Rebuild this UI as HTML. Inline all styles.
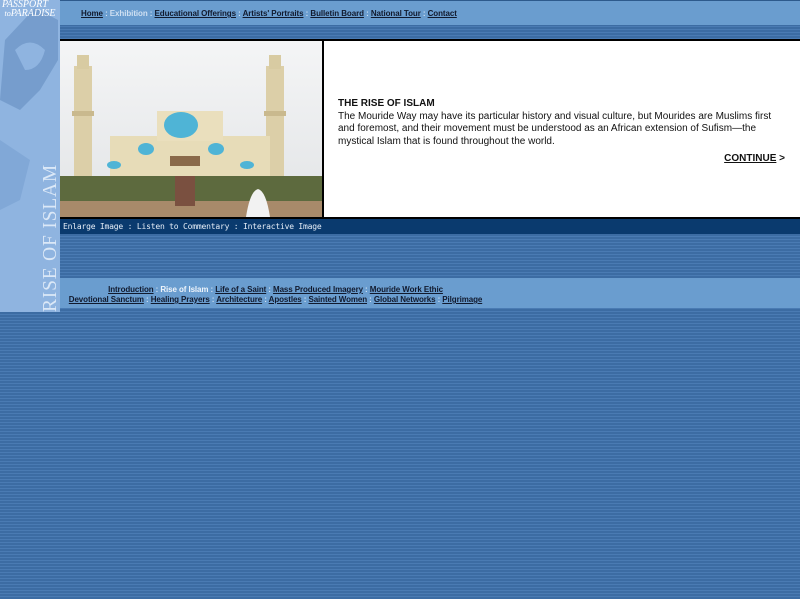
<!DOCTYPE html>
<html><head><meta charset="utf-8"><style>
*{margin:0;padding:0}
body{width:800px;height:599px;overflow:hidden;position:relative;font-family:"Liberation Sans",Arial,sans-serif;
background:repeating-linear-gradient(to bottom,#3c6ca3 0,#3c6ca3 2px,#4a7bb3 2px,#4a7bb3 3px);}
.abs{position:absolute}
a{color:#0d1a33;text-decoration:underline;font-weight:bold}
.nav{font-size:8px;font-weight:bold;color:#cfe0f2;white-space:nowrap}
.nav a{color:#111a2e}
</style></head><body>
<div class="abs" style="left:0;top:0;width:60px;height:312px;background:#8fb4e0;overflow:hidden">
<svg width="60" height="312" style="position:absolute;left:0;top:0">
<path d="M5 40 L35 8 L58 20 L58 60 L40 90 L20 110 L0 100 Z" fill="#6f97c8" opacity=".8"/>
<path d="M15 50 Q30 35 45 50 Q40 70 25 70 Z" fill="#8fb4e0"/>
<path d="M0 140 L30 160 L20 200 L0 210 Z" fill="#7aa2d3" opacity=".7"/>
</svg>
<div class="abs" style="left:2px;top:0;color:#fff;font-family:'Liberation Serif',serif;font-style:italic;font-size:10px;line-height:9px">PASSPORT<br>&nbsp;<span style="font-size:8px">to</span>PARADISE</div>
<div class="abs" style="left:42px;top:312px;transform-origin:0 0;transform:rotate(-90deg);color:#dbe8f7;font-family:'Liberation Serif',serif;font-size:19.5px;letter-spacing:0.8px;white-space:nowrap;line-height:18px">RISE OF ISLAM</div>
</div>
<div class="abs" style="left:60px;top:0;width:740px;height:25px;background:#6a9dcf;border-top:1px solid #2d5a8c;box-sizing:border-box"></div>
<div class="abs nav" style="left:81px;top:9px;letter-spacing:-0.08px">
<a>Home</a> : Exhibition : <a>Educational Offerings</a> : <a>Artists' Portraits</a> : <a>Bulletin Board</a> : <a>National Tour</a> : <a>Contact</a></div>
<div class="abs" style="left:60px;top:39px;width:740px;height:2px;background:#000"></div>
<div class="abs" style="left:60px;top:41px;width:262px;height:176px;overflow:hidden;background:#eceef0">
<svg width="262" height="176">
<defs><linearGradient id="s" x1="0" y1="0" x2="0" y2="1"><stop offset="0" stop-color="#f4f5f6"/><stop offset="1" stop-color="#e2e4e6"/></linearGradient></defs>
<rect width="262" height="176" fill="url(#s)"/>
<rect x="14" y="25" width="18" height="110" fill="#dccfa8"/><rect x="17" y="14" width="12" height="14" fill="#d8cba2"/>
<rect x="206" y="25" width="18" height="110" fill="#dccfa8"/><rect x="209" y="14" width="12" height="14" fill="#d8cba2"/>
<rect x="12" y="70" width="22" height="5" fill="#c9b98e"/><rect x="204" y="70" width="22" height="5" fill="#c9b98e"/>
<rect x="50" y="95" width="160" height="45" fill="#e7dcb8"/>
<rect x="97" y="70" width="66" height="30" fill="#eadfbd"/>
<ellipse cx="121" cy="84" rx="17" ry="13" fill="#4fb4d6"/>
<ellipse cx="86" cy="108" rx="8" ry="6" fill="#4fb4d6"/><ellipse cx="156" cy="108" rx="8" ry="6" fill="#4fb4d6"/>
<ellipse cx="54" cy="124" rx="7" ry="4" fill="#4fb4d6"/><ellipse cx="187" cy="124" rx="7" ry="4" fill="#4fb4d6"/>
<rect x="110" y="115" width="30" height="10" fill="#8a6a4a"/>
<rect x="0" y="135" width="262" height="30" fill="#5d6a3e"/>
<rect x="0" y="160" width="262" height="16" fill="#a88a6a"/>
<rect x="115" y="135" width="20" height="30" fill="#7a5040"/>
<path d="M186 176 Q190 150 198 148 Q206 150 210 176 Z" fill="#f2f2f2"/>
</svg></div>
<div class="abs" style="left:322px;top:41px;width:2px;height:176px;background:#000"></div>
<div class="abs" style="left:324px;top:41px;width:476px;height:176px;background:#fff"></div>
<div class="abs" style="left:338px;top:98px;width:446px;font-size:10px;line-height:12.5px;color:#111">
<b>THE RISE OF ISLAM</b><br>The Mouride Way may have its particular history and visual culture, but Mourides are Muslims first and foremost, and their movement must be understood as an African extension of Sufism—the mystical Islam that is found throughout the world.
<div style="position:absolute;right:-1px;top:55px;font-weight:bold;white-space:nowrap"><a style="color:#111">CONTINUE</a> &gt;</div></div>
<div class="abs" style="left:60px;top:217px;width:740px;height:2px;background:#000"></div>
<div class="abs" style="left:60px;top:219px;width:740px;height:15px;background:#0a3a6e;color:#e6eef8;font-family:'DejaVu Sans Mono',monospace;font-size:8px;line-height:15px;padding-left:3px;box-sizing:border-box;letter-spacing:-0.2px">Enlarge Image : Listen to Commentary : Interactive Image</div>
<div class="abs" style="left:60px;top:278px;width:740px;height:30px;background:#6a9dcf"></div>
<div class="abs nav" style="left:60px;top:285px;width:431px;text-align:center;line-height:10px;letter-spacing:-0.1px">
<a>Introduction</a> : <span style="color:#eef4fb">Rise of Islam</span> : <a>Life of a Saint</a> : <a>Mass Produced Imagery</a> : <a>Mouride Work Ethic</a><br>
<a>Devotional Sanctum</a> : <a>Healing Prayers</a> : <a>Architecture</a> : <a>Apostles</a> : <a>Sainted Women</a> : <a>Global Networks</a> : <a>Pilgrimage</a></div>
</body></html>
